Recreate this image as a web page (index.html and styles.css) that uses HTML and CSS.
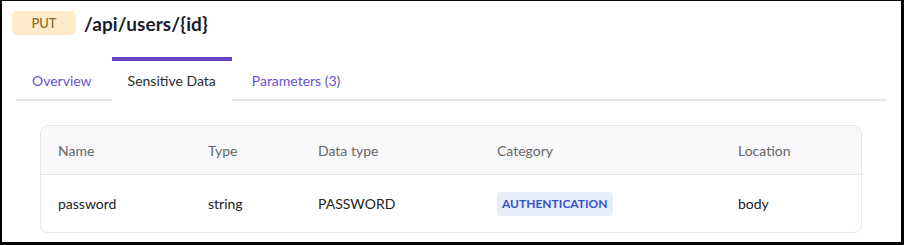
FILE: index.html
```html
<!DOCTYPE html>
<html>
<head>
<meta charset="utf-8">
<link rel="stylesheet" href="styles.css">
</head>
<body>
<div class="frame">
  <div class="header">
    <span class="method">PUT</span>
    <h1 class="path">/api/users/{id}</h1>
  </div>
  <div class="tabs">
    <div class="tab first">Overview</div>
    <div class="tab active">Sensitive Data</div>
    <div class="tab last">Parameters (3)</div>
  </div>
  <div class="card">
    <div class="row head">
      <div class="cell">Name</div>
      <div class="cell">Type</div>
      <div class="cell">Data type</div>
      <div class="cell">Category</div>
      <div class="cell">Location</div>
    </div>
    <div class="row body">
      <div class="cell">password</div>
      <div class="cell">string</div>
      <div class="cell">PASSWORD</div>
      <div class="cell"><span class="cat">AUTHENTICATION</span></div>
      <div class="cell">body</div>
    </div>
  </div>
</div>
</body>
</html>
```
FILE: styles.css
```css
* { box-sizing: border-box; }
html, body { margin: 0; padding: 0; background: #fff; }
body { font-family: "Lato", "Liberation Sans", sans-serif; }
.frame {
  width: 904px;
  height: 245px;
  border-style: solid;
  border-color: #000;
  border-width: 1px 3px 3px 2px;
  padding: 10px 0 0 0;
  overflow: hidden;
}
.header {
  display: flex;
  align-items: center;
  gap: 8px;
  height: 24px;
  margin-left: 10px;
}
.method {
  display: flex;
  align-items: center;
  justify-content: center;
  width: 64px;
  height: 24px;
  background: #fdebc9;
  color: #8b6a2f;
  border-radius: 5px;
  font-size: 13px;
  font-weight: 500;
}
.path {
  margin: 0;
  font-size: 19px;
  font-weight: 700;
  color: #1b1b2a;
  letter-spacing: 0.1px;
}
.tabs {
  display: flex;
  margin: 22px 14px 0 14px;
  border-bottom: 2px solid #e6e6e6;
  height: 44px;
}
.tab {
  padding: 0 16px 2px 16px;
  height: 44px;
  display: flex;
  align-items: center;
  font-size: 14px;
  color: #6a4fcf;
  border-top: 4px solid transparent;
}
.tab.first { padding-right: 20px; }
.tab.active {
  color: #2b2b2b;
  border-top-color: #6743c4;
  background: #fff;
  height: 46px;
  margin-bottom: -2px;
  padding-bottom: 4px;
}
.tab.last { padding-left: 20px; }
.card {
  margin: 24px 39px 0 38px;
  border: 1px solid #e6e6e6;
  border-radius: 8px;
  overflow: hidden;
}
.row {
  display: grid;
  grid-template-columns: 150px 110px 179px 241px 1fr;
  align-items: center;
  padding-left: 17px;
}
.row.head {
  height: 49px;
  background: #f9f9fb;
  border-bottom: 1px solid #e6e6e6;
  color: #666;
}
.row.body {
  height: 57px;
  color: #222;
}
.cell { font-size: 14px; }
.cat {
  display: inline-flex;
  align-items: center;
  height: 24px;
  padding: 0 5px;
  background: #e7ecfb;
  color: #3554c6;
  border-radius: 4px;
  font-size: 12px;
  font-weight: 700;
}
```
